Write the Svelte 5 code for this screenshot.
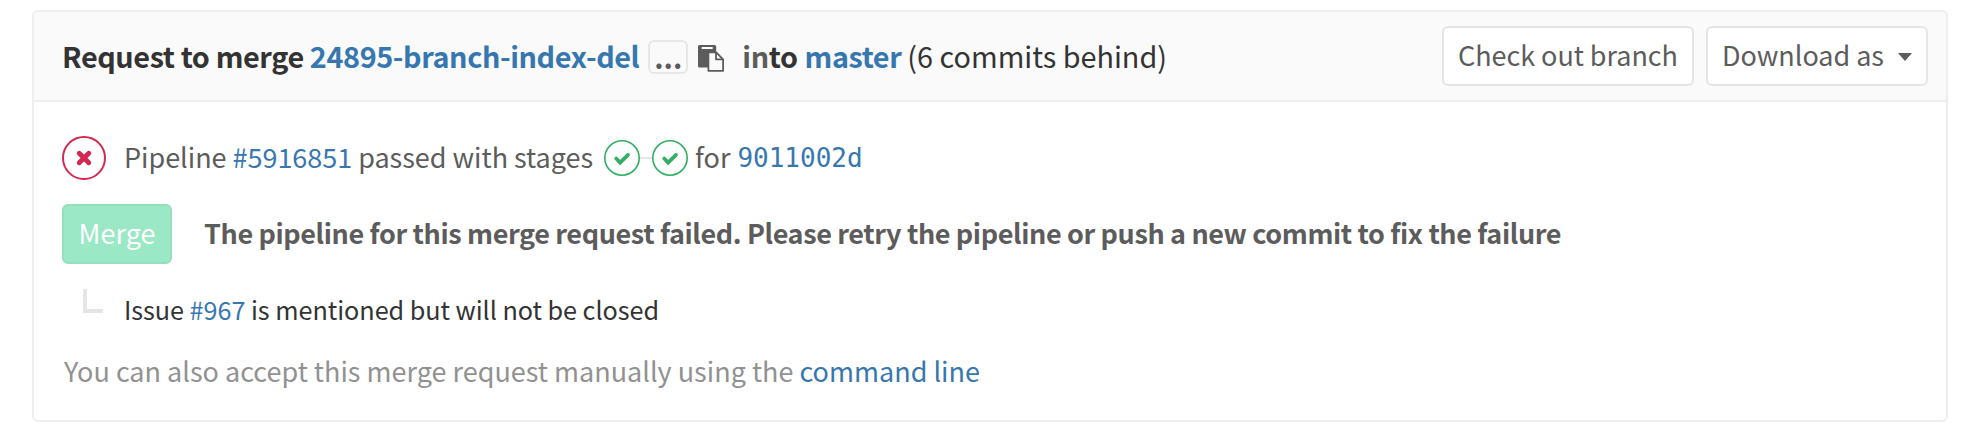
<script lang="ts">
  const stages = ['build', 'test'];
</script>

<section class="widget">
  <header class="heading">
    <div class="title">
      <strong class="req">Request to merge <a href="#branch">24895-branch-index-del</a></strong>
      <button class="dots"><span>...</span></button>
      <svg class="copy" viewBox="0 0 26 27" width="26" height="27">
        <path fill="#5c5c5c" d="M1.500 0h15.200a1.500 1.500 0 0 1 1.500 1.500V22.500H1.500A1.500 1.500 0 0 1 0 21V1.500A1.500 1.500 0 0 1 1.500 0zM3.700 1.900v2h11v-2z" fill-rule="evenodd" />
        <path fill="#fafafa" stroke="#5c5c5c" stroke-width="1.800" stroke-linejoin="round" d="M10.400 7.300h7.800l6.900 7v11.500H10.400z" />
        <path fill="none" stroke="#5c5c5c" stroke-width="1.800" stroke-linejoin="round" d="M18 7.300v7h7" />
      </svg>
      <strong class="into"><span class="soft">in</span>to</strong>
      <a class="target" href="#master">master</a>
      <span class="behind">(6 commits behind)</span>
    </div>
    <div class="actions">
      <button class="btn checkout"><span>Check out branch</span></button>
      <button class="btn download"><span>Download as</span><i class="caret"></i></button>
    </div>
  </header>

  <div class="body">
    <div class="row pipeline">
      <svg class="failed" viewBox="0 0 44 44" width="44" height="44">
        <circle cx="22" cy="22" r="21" fill="none" stroke="#d22852" stroke-width="2" />
        <path d="M17.200 17.200l9.600 9.600M26.800 17.200l-9.600 9.600" stroke="#d22852" stroke-width="4.800" stroke-linecap="round" />
      </svg>
      <span class="status">Pipeline <a href="#pipeline">#5916851</a> passed with stages</span>
      <span class="stages">
        {#each stages as stage (stage)}
          <svg viewBox="0 0 36 36" width="36" height="36">
            <circle cx="18" cy="18" r="17.200" fill="none" stroke="#31af64" stroke-width="1.600" />
            <path d="M12.200 18.500l4 4 7.800-7.600" fill="none" stroke="#31af64" stroke-width="3.800" stroke-linecap="round" />
          </svg>
        {/each}
      </span>
      <span class="for">for</span>
      <a class="sha" href="#commit">9011002d</a>
    </div>

    <div class="row accept">
      <button class="merge"><span>Merge</span></button>
      <strong class="message">The pipeline for this merge request failed. Please retry the pipeline or push a new commit to fix the failure</strong>
    </div>

    <div class="row issue">
      <i class="elbow"></i>
      <span class="mention">Issue <a href="#issue">#967</a> is mentioned but will not be closed</span>
    </div>

    <p class="row manual">You can also accept this merge request manually using the <a href="#cli">command line</a></p>
  </div>
</section>

<style>
  :global(body) {
    background: #fff;
  }
  .widget {
    box-sizing: border-box;
    width: 1916px;
    height: 412px;
    margin: 10px 0 0 32px;
    border: 2px solid #eee;
    border-radius: 6px;
    overflow: hidden;
    font: 27px/40px 'Noto Sans CJK SC', sans-serif;
    color: #5c5c5c;
    white-space: nowrap;
  }
  a {
    color: #3777b0;
    text-decoration: none;
  }
  button {
    box-sizing: border-box;
    margin: 0;
    font: inherit;
    color: inherit;
    white-space: nowrap;
  }
  .heading {
    display: flex;
    justify-content: space-between;
    box-sizing: border-box;
    height: 90px;
    padding: 14px 18px 0 28px;
    border-bottom: 2px solid #eee;
    background: #fafafa;
    color: #333;
  }
  .title {
    display: flex;
    align-items: flex-start;
    padding-top: 10px;
    font-size: 28.8px;
  }
  strong,
  .target {
    font-weight: 600;
    letter-spacing: -0.4px;
  }
  .dots {
    width: 40px;
    height: 34px;
    margin: 4px 10px 0 9px;
    padding: 0;
    border: 2px solid #e7e7e7;
    border-radius: 6px;
    background: #fafafa;
    color: #5c5c5c;
    font-weight: 600;
    line-height: 28px;
  }
  .copy {
    margin-top: 9px;
  }
  .into {
    margin-left: 18px;
  }
  .soft {
    color: #5c5c5c;
  }
  .target {
    margin-left: 7px;
  }
  .behind {
    margin-left: 6px;
  }
  .actions {
    display: flex;
    gap: 12px;
  }
  .btn {
    display: flex;
    align-items: center;
    justify-content: space-between;
    height: 60px;
    padding: 0 14px 2px;
    border: 2px solid #e5e5e5;
    border-radius: 6px;
    background: #fff;
    color: #5c5c5c;
    letter-spacing: -0.04px;
  }
  .checkout {
    width: 252px;
  }
  .download {
    width: 222px;
  }
  .caret {
    margin-top: 4px;
    border: 7px solid transparent;
    border-top: 8px solid #5c5c5c;
    border-bottom: 0;
  }
  .body {
    padding: 34px 28px 0;
  }
  .row {
    display: flex;
    align-items: center;
  }
  .pipeline {
    height: 44px;
  }
  .status {
    margin: -2px 0 0 18px;
    letter-spacing: -0.03px;
  }
  .for {
    margin-top: -2px;
  }
  .stages {
    display: flex;
    gap: 12px;
    margin: 0 7px 0 11px;
    background: linear-gradient(#e5e5e5, #e5e5e5) center / 12px 2px no-repeat;
  }
  .sha {
    margin-left: 7px;
    font-family: 'DejaVu Sans Mono', monospace;
    font-size: 26px;
  }
  .accept {
    margin-top: 24px;
    height: 60px;
  }
  .merge {
    width: 110px;
    height: 60px;
    padding: 0 0 2px;
    border: 2px solid #95dfbd;
    border-radius: 6px;
    background: #9ae8c5;
    color: #fff;
  }
  .message {
    margin: -2px 0 0 32px;
    letter-spacing: -0.38px;
  }
  .issue {
    align-items: flex-start;
    height: 40px;
    margin-top: 25px;
    padding-left: 21px;
    font-size: 25.2px;
    letter-spacing: -0.04px;
    color: #333;
  }
  .elbow {
    box-sizing: border-box;
    width: 20px;
    height: 24px;
    border: solid #e5e5e5;
    border-width: 0 0 4px 4px;
  }
  .mention {
    margin-left: 21px;
  }
  .manual {
    display: block;
    margin: 22px 0 0 2px;
    color: #919191;
  }
</style>
